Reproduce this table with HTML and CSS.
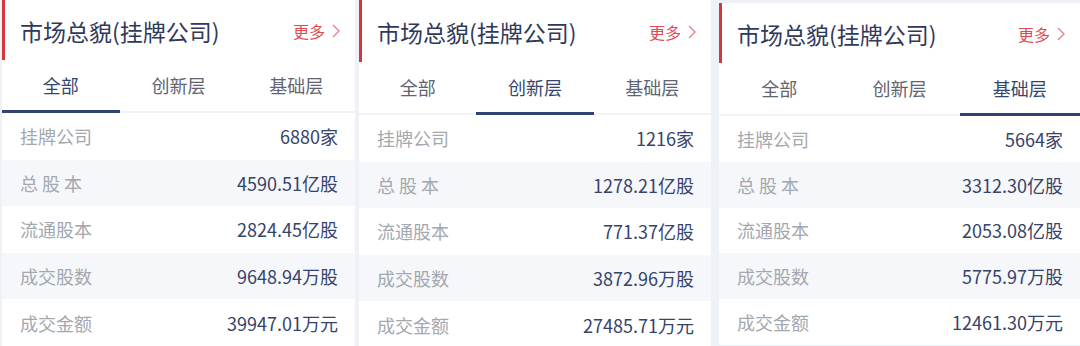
FILE: index.html
```html
<!DOCTYPE html>
<html lang="zh-CN">
<head>
<meta charset="utf-8">
<title>市场总貌</title>
<link rel="stylesheet" href="styles.css">
</head>
<body>
<div class="board">
  <section class="panel panel-a">
    <header class="panel-head">
      <h2 class="title">市场总貌(挂牌公司)</h2>
      <a class="more">更多<svg class="chev" viewBox="0 0 8 14" width="8" height="14"><polyline points="1,1 7,7 1,13" fill="none" stroke="currentColor" stroke-width="1.4"/></svg></a>
    </header>
    <nav class="tabs">
      <span class="tab active">全部</span>
      <span class="tab">创新层</span>
      <span class="tab">基础层</span>
    </nav>
    <ul class="rows">
      <li class="row"><span class="label">挂牌公司</span><span class="value">6880家</span></li>
      <li class="row alt"><span class="label">总 股 本</span><span class="value">4590.51亿股</span></li>
      <li class="row"><span class="label">流通股本</span><span class="value">2824.45亿股</span></li>
      <li class="row alt"><span class="label">成交股数</span><span class="value">9648.94万股</span></li>
      <li class="row"><span class="label">成交金额</span><span class="value">39947.01万元</span></li>
    </ul>
  </section>
  <section class="panel panel-b">
    <header class="panel-head">
      <h2 class="title">市场总貌(挂牌公司)</h2>
      <a class="more">更多<svg class="chev" viewBox="0 0 8 14" width="8" height="14"><polyline points="1,1 7,7 1,13" fill="none" stroke="currentColor" stroke-width="1.4"/></svg></a>
    </header>
    <nav class="tabs">
      <span class="tab">全部</span>
      <span class="tab active">创新层</span>
      <span class="tab">基础层</span>
    </nav>
    <ul class="rows">
      <li class="row"><span class="label">挂牌公司</span><span class="value">1216家</span></li>
      <li class="row alt"><span class="label">总 股 本</span><span class="value">1278.21亿股</span></li>
      <li class="row"><span class="label">流通股本</span><span class="value">771.37亿股</span></li>
      <li class="row alt"><span class="label">成交股数</span><span class="value">3872.96万股</span></li>
      <li class="row"><span class="label">成交金额</span><span class="value">27485.71万元</span></li>
    </ul>
  </section>
  <section class="panel panel-c">
    <header class="panel-head">
      <h2 class="title">市场总貌(挂牌公司)</h2>
      <a class="more">更多<svg class="chev" viewBox="0 0 8 14" width="8" height="14"><polyline points="1,1 7,7 1,13" fill="none" stroke="currentColor" stroke-width="1.4"/></svg></a>
    </header>
    <nav class="tabs">
      <span class="tab">全部</span>
      <span class="tab">创新层</span>
      <span class="tab active">基础层</span>
    </nav>
    <ul class="rows">
      <li class="row"><span class="label">挂牌公司</span><span class="value">5664家</span></li>
      <li class="row alt"><span class="label">总 股 本</span><span class="value">3312.30亿股</span></li>
      <li class="row"><span class="label">流通股本</span><span class="value">2053.08亿股</span></li>
      <li class="row alt"><span class="label">成交股数</span><span class="value">5775.97万股</span></li>
      <li class="row"><span class="label">成交金额</span><span class="value">12461.30万元</span></li>
    </ul>
  </section>
</div>
</body>
</html>
```
FILE: styles.css
```css
* { box-sizing: border-box; }
html, body { margin: 0; padding: 0; }
body {
  background: #eef1f5;
  font-family: "Noto Sans CJK SC", "Noto Sans", sans-serif;
  width: 1080px;
  height: 346px;
  overflow: hidden;
}
.board {
  display: flex;
  align-items: flex-start;
  padding-left: 2px;
}
.panel {
  background: #fff;
  display: flex;
  flex-direction: column;
}
.panel-a { width: 353px; }
.panel-b { width: 352px; margin-left: 4px; }
.panel-c { width: 361px; margin-left: 8px; margin-top: 3px; }
.panel-b .panel-head { height: 62px; }
.panel-c .row { height: 45.8px; }

.panel-head {
  height: 60px;
  border-left: 3px solid #d7363c;
  display: flex;
  align-items: center;
  justify-content: space-between;
  padding: 2px 15px 0 15px;
}
.title {
  margin: 0;
  font-size: 23px;
  font-weight: 400;
  color: #2f3a5a;
}
.more {
  display: flex;
  align-items: center;
  gap: 7px;
  font-size: 16px;
  color: #e2494f;
}
.chev { color: #e98387; }

.tabs {
  display: flex;
  height: 53px;
  border-bottom: 2px solid #f1f3f6;
}
.tab {
  flex: 1;
  display: flex;
  align-items: center;
  justify-content: center;
  font-size: 18px;
  color: #5f6470;
  margin-bottom: -2px;
  border-bottom: 3px solid transparent;
}
.tab.active {
  color: #34466f;
  border-bottom-color: #2f4473;
}

.rows {
  list-style: none;
  margin: 0;
  padding: 0;
}
.row {
  height: 46.6px;
  display: flex;
  align-items: center;
  justify-content: space-between;
  padding: 0 17px 0 18px;
  font-size: 18px;
}
.row.alt { background: #f5f7fa; }
.label { color: #a3a7ae; white-space: pre; }
.value { color: #36436a; }
```
